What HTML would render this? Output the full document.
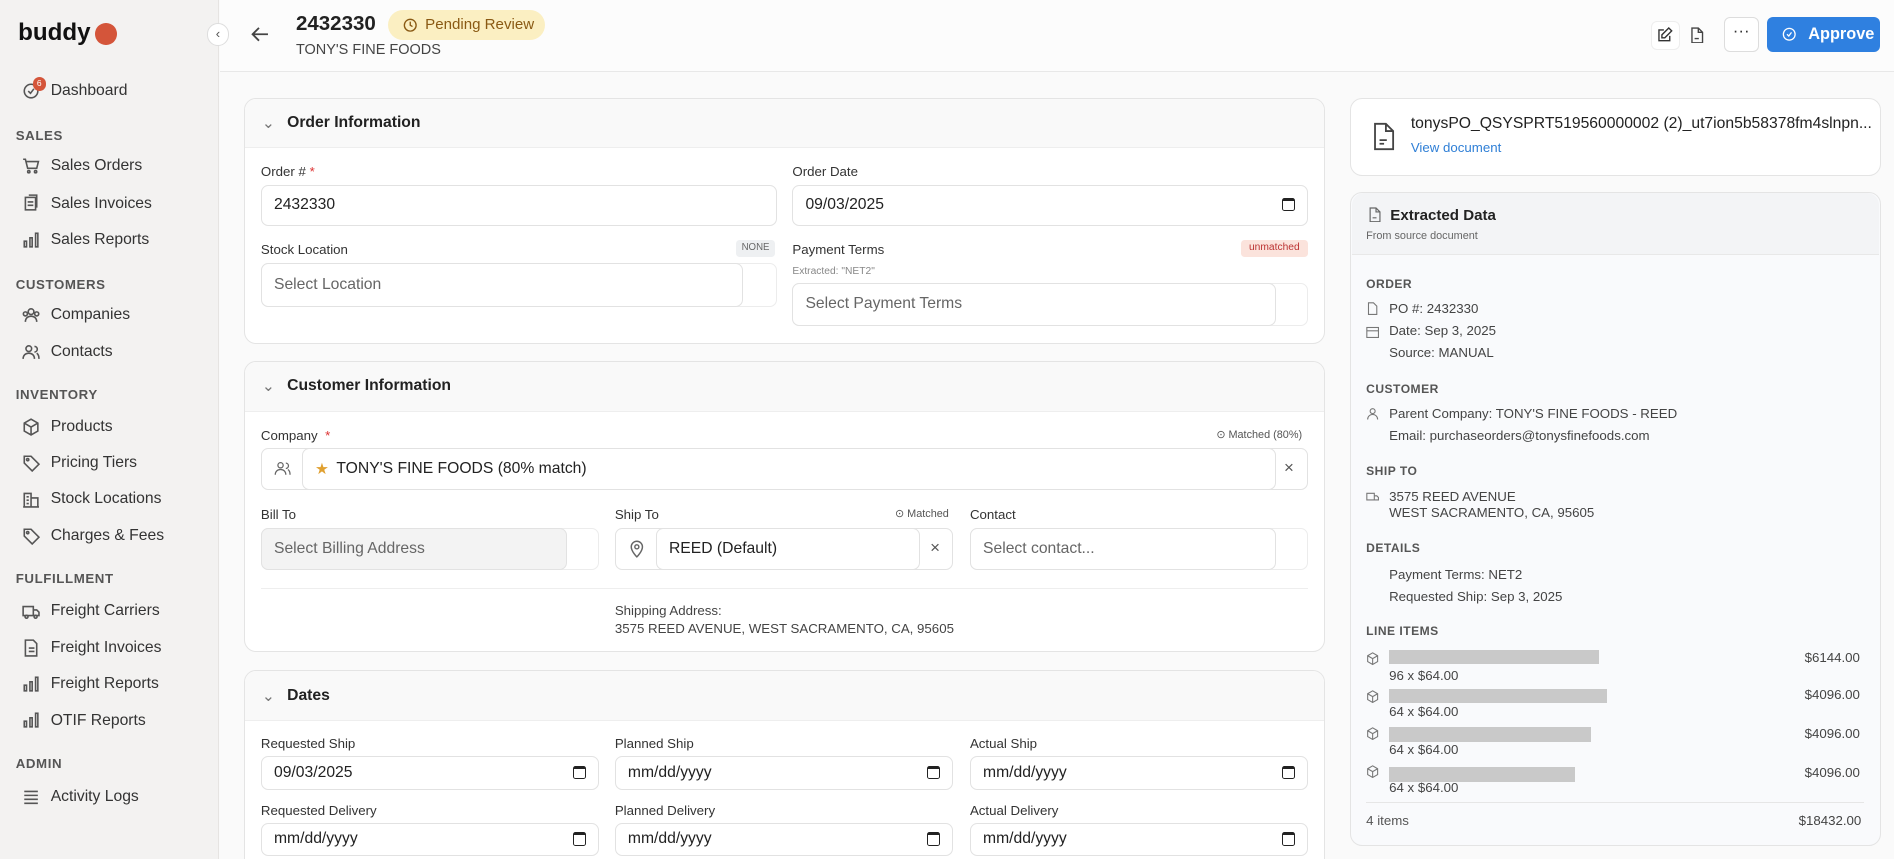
<!DOCTYPE html><html><head><meta charset="utf-8"><style>
*{box-sizing:border-box;margin:0;padding:0}
html,body{width:1894px;height:859px;overflow:hidden;background:#fafafa}
#r{zoom:1.20791;width:1568px;height:711px;position:relative;font-family:"Liberation Sans",sans-serif;color:#222;font-size:12px;overflow:hidden}
.a{position:absolute}
.side{left:0;top:0;width:181px;height:711px;background:#f3f2f1;border-right:1px solid #e6e4e2}
.nav{left:18px;font-size:13px;color:#333;display:flex;align-items:center;gap:9px}
.nav svg{width:15px;height:15px;stroke:#555;fill:none;stroke-width:1.4}
.sec{left:13px;font-size:11px;font-weight:bold;color:#555;letter-spacing:.5px}
.card{background:#fff;border:1px solid #e4e4e4;border-radius:10px;overflow:hidden}
.ch{height:41px;background:#f9f9f9;border-bottom:1px solid #eee;display:flex;align-items:center;padding-left:14px;font-weight:bold;font-size:13px;gap:10px}
.lb{font-size:11px;color:#333}
.in{border:1px solid #e2e2e2;border-radius:6px;background:#fff;font-size:13px;color:#222;display:flex;align-items:center;padding-left:10px}
.ph{color:#666}
.cal{position:absolute;right:10px;top:50%;margin-top:-6px;width:11px;height:11px;border:1.5px solid #222;border-radius:2px;border-top-width:3px}
.rs{font-size:10px;color:#555;font-weight:bold;letter-spacing:.4px}
.rt{font-size:11px;color:#444}
.ri{width:11px;height:11px;stroke:#777;fill:none;stroke-width:1.3}
.blur{background:#c9c9c9;height:12px}
</style></head><body><div id="r">
<div class="a side"></div>
<div class="a" style="left:15px;top:16px;font-size:20px;font-weight:bold;color:#111">buddy</div>
<div class="a" style="left:79px;top:19px;width:18px;height:18px;border-radius:50%;background:#d4553a"></div>

<div class="a nav" style="top:68px"><svg viewBox="0 0 16 16"><circle cx="8" cy="8" r="6"/><path d="M5.5 8l2 2 3-4"/></svg><span style="margin-left:0">Dashboard</span></div>
<div class="a" style="left:27px;top:64px;width:11px;height:11px;border-radius:50%;background:#d4553a;color:#fff;font-size:7px;text-align:center;line-height:11px">6</div>
<div class="a sec" style="top:106px">SALES</div>
<div class="a nav" style="top:130px"><svg viewBox="0 0 16 16"><path d="M1 2h2l2 8h8l1.5-6H4"/><circle cx="6" cy="13" r="1"/><circle cx="12" cy="13" r="1"/></svg>Sales Orders</div>
<div class="a nav" style="top:161px"><svg viewBox="0 0 16 16"><rect x="3" y="3" width="9" height="11"/><path d="M6 1h7v11M5 7h5M5 10h5"/></svg>Sales Invoices</div>
<div class="a nav" style="top:191px"><svg viewBox="0 0 16 16"><rect x="2" y="9" width="2" height="5"/><rect x="7" y="6" width="2" height="8"/><rect x="12" y="2" width="2" height="12"/></svg>Sales Reports</div>
<div class="a sec" style="top:229px">CUSTOMERS</div>
<div class="a nav" style="top:253px"><svg viewBox="0 0 16 16"><circle cx="8" cy="5" r="2.5"/><circle cx="3" cy="7" r="1.8"/><circle cx="13" cy="7" r="1.8"/><path d="M3 14c0-3 2-5 5-5s5 2 5 5"/></svg>Companies</div>
<div class="a nav" style="top:284px"><svg viewBox="0 0 16 16"><circle cx="6" cy="5" r="2.5"/><path d="M1 14c0-3 2-5 5-5s5 2 5 5M11 3a2.5 2.5 0 010 5M13 9c1.5 1 2 3 2 5"/></svg>Contacts</div>
<div class="a sec" style="top:320px">INVENTORY</div>
<div class="a nav" style="top:346px"><svg viewBox="0 0 16 16"><path d="M8 1l6 3.5v7L8 15l-6-3.5v-7zM2 4.5L8 8l6-3.5M8 8v7"/></svg>Products</div>
<div class="a nav" style="top:376px"><svg viewBox="0 0 16 16"><path d="M2 2h6l7 7-6 6-7-7z"/><circle cx="5" cy="5" r="1"/></svg>Pricing Tiers</div>
<div class="a nav" style="top:406px"><svg viewBox="0 0 16 16"><path d="M2 15V3h6v12M8 7h6v8M1 15h14M4 6h2M4 9h2M4 12h2"/></svg>Stock Locations</div>
<div class="a nav" style="top:436px"><svg viewBox="0 0 16 16"><path d="M2 2h6l7 7-6 6-7-7z"/><circle cx="5" cy="5" r="1"/></svg>Charges &amp; Fees</div>
<div class="a sec" style="top:473px">FULFILLMENT</div>
<div class="a nav" style="top:498px"><svg viewBox="0 0 16 16"><path d="M1 4h9v8H1zM10 7h3l2 2v3h-5"/><circle cx="4" cy="13" r="1.3"/><circle cx="12" cy="13" r="1.3"/></svg>Freight Carriers</div>
<div class="a nav" style="top:529px"><svg viewBox="0 0 16 16"><path d="M3 1h7l3 3v11H3zM6 8h5M6 11h5"/></svg>Freight Invoices</div>
<div class="a nav" style="top:559px"><svg viewBox="0 0 16 16"><rect x="2" y="9" width="2" height="5"/><rect x="7" y="6" width="2" height="8"/><rect x="12" y="2" width="2" height="12"/></svg>Freight Reports</div>
<div class="a nav" style="top:589px"><svg viewBox="0 0 16 16"><rect x="2" y="9" width="2" height="5"/><rect x="7" y="6" width="2" height="8"/><rect x="12" y="2" width="2" height="12"/></svg>OTIF Reports</div>
<div class="a sec" style="top:626px">ADMIN</div>
<div class="a nav" style="top:652px"><svg viewBox="0 0 16 16"><path d="M2 3h12M2 6.5h12M2 10h12M2 13.5h12"/></svg>Activity Logs</div>

<!-- header -->
<div class="a" style="left:182px;top:0;width:1386px;height:60px;background:#fcfcfc;border-bottom:1px solid #e8e8e8"></div>
<div class="a" style="left:171px;top:19px;width:19px;height:19px;border-radius:50%;background:#fff;border:1px solid #ddd;font-size:11px;color:#555;text-align:center;line-height:16px;z-index:5">‹</div>
<svg class="a" style="left:207px;top:20px" width="17" height="17" viewBox="0 0 16 16" fill="none" stroke="#444" stroke-width="1.4"><path d="M14 8H2M7 3L2 8l5 5"/></svg>
<div class="a" style="left:245px;top:10px;font-size:17px;font-weight:bold;color:#222">2432330</div>
<div class="a" style="left:321px;top:8px;width:130px;height:25px;border-radius:13px;background:#fbefc2;color:#8a5a14;font-size:12.5px;display:flex;align-items:center;padding-left:13px;gap:6px"><svg width="12" height="12" viewBox="0 0 16 16" fill="none" stroke="#8a5a14" stroke-width="1.5"><circle cx="8" cy="8" r="6.5"/><path d="M8 4v4l2.5 1.5"/></svg>Pending Review</div>
<div class="a" style="left:245px;top:35px;font-size:12px;color:#444">TONY'S FINE FOODS</div>
<div class="a" style="left:1367px;top:17px;width:24px;height:24px;border:1px solid #eee;border-radius:5px;background:#fff"></div>
<svg class="a" style="left:1372px;top:22px" width="13" height="13" viewBox="0 0 16 16" fill="none" stroke="#333" stroke-width="1.4"><path d="M7 3H2v11h11V9M12 1l3 3-7 7H5V8z"/></svg>
<svg class="a" style="left:1399px;top:22px" width="12" height="14" viewBox="0 0 12 16" fill="none" stroke="#444" stroke-width="1.3"><path d="M1 1h6l4 4v10H1zM7 1v4h4M3.5 11h4"/></svg>
<div class="a" style="left:1427px;top:14px;width:29px;height:29px;border:1px solid #ddd;border-radius:5px;background:#fff;text-align:center;font-size:14px;line-height:22px;color:#333">···</div>
<div class="a" style="left:1463px;top:14px;width:93px;height:29px;border-radius:5px;background:#2f80e0;color:#fff;font-size:13.5px;font-weight:bold;display:flex;align-items:center;padding-left:12px;gap:10px"><svg width="12" height="12" viewBox="0 0 16 16" fill="none" stroke="#fff" stroke-width="1.4"><circle cx="8" cy="8" r="6.5"/><path d="M5.5 8l2 2 3-4"/></svg>Approve</div>

<!-- card 1 -->
<div class="a card" style="left:202px;top:81px;width:895px;height:204px"><div class="ch"><span style="color:#777;font-weight:normal">⌄</span>Order Information</div></div>
<div class="a lb" style="left:216px;top:136px">Order # <span style="color:#d33">*</span></div>
<div class="a in" style="left:216px;top:153px;width:427px;height:34px">2432330</div>
<div class="a lb" style="left:656px;top:136px">Order Date</div>
<div class="a in" style="left:656px;top:153px;width:427px;height:34px">09/03/2025<span class="cal"></span></div>
<div class="a lb" style="left:216px;top:200px">Stock Location</div>
<div class="a" style="left:609px;top:199px;width:33px;height:14px;background:#eef0f2;border-radius:3px;font-size:8px;color:#666;text-align:center;line-height:14px">NONE</div>
<div class="a in" style="left:216px;top:218px;width:427px;height:36px;border-color:#ececec"></div>
<div class="a in ph" style="left:216px;top:218px;width:399px;height:36px">Select Location</div>
<div class="a lb" style="left:656px;top:200px">Payment Terms</div>
<div class="a" style="left:1027px;top:199px;width:56px;height:14px;background:#fbe3dc;border-radius:3px;font-size:8.5px;color:#b33;text-align:center;line-height:14px">unmatched</div>
<div class="a" style="left:656px;top:220px;font-size:8.5px;color:#888">Extracted: "NET2"</div>
<div class="a in" style="left:656px;top:234px;width:427px;height:36px;border-color:#ececec"></div>
<div class="a in ph" style="left:656px;top:234px;width:400px;height:36px">Select Payment Terms</div>

<!-- card 2 -->
<div class="a card" style="left:202px;top:299px;width:895px;height:241px"><div class="ch"><span style="color:#777;font-weight:normal">⌄</span>Customer Information</div></div>
<div class="a lb" style="left:216px;top:354px">Company &nbsp;<span style="color:#d33">*</span></div>
<div class="a" style="left:1007px;top:354px;font-size:9px;color:#555">⊙ Matched (80%)</div>
<div class="a in" style="left:216px;top:371px;width:867px;height:35px"></div>
<svg class="a" style="left:226px;top:381px" width="16" height="14" viewBox="0 0 16 16" fill="none" stroke="#666" stroke-width="1.2"><circle cx="6" cy="5" r="2.5"/><path d="M1 14c0-3 2-5 5-5s5 2 5 5M11 3a2.5 2.5 0 010 5M13 9c1.5 1 2 3 2 5"/></svg>
<div class="a in" style="left:250px;top:371px;width:806px;height:35px;gap:6px"><span style="color:#e0a030">★</span>TONY'S FINE FOODS (80% match)</div>
<div class="a" style="left:1063px;top:379px;font-size:14px;color:#555">×</div>
<div class="a lb" style="left:216px;top:420px">Bill To</div>
<div class="a in" style="left:216px;top:437px;width:280px;height:35px;border-color:#ececec"></div>
<div class="a in ph" style="left:216px;top:437px;width:253px;height:35px;background:#f3f3f3">Select Billing Address</div>
<div class="a lb" style="left:509px;top:420px">Ship To</div>
<div class="a" style="left:741px;top:420px;font-size:9px;color:#555">⊙ Matched</div>
<div class="a in" style="left:509px;top:437px;width:280px;height:35px"></div>
<svg class="a" style="left:521px;top:447px" width="13" height="15" viewBox="0 0 14 16" fill="none" stroke="#666" stroke-width="1.3"><path d="M7 15s5-5 5-9A5 5 0 002 6c0 4 5 9 5 9z"/><circle cx="7" cy="6" r="1.8"/></svg>
<div class="a in" style="left:543px;top:437px;width:219px;height:35px">REED (Default)</div>
<div class="a" style="left:770px;top:445px;font-size:14px;color:#555">×</div>
<div class="a lb" style="left:803px;top:420px">Contact</div>
<div class="a in" style="left:803px;top:437px;width:280px;height:35px;border-color:#ececec"></div>
<div class="a in ph" style="left:803px;top:437px;width:253px;height:35px">Select contact...</div>
<div class="a" style="left:216px;top:487px;width:867px;height:1px;background:#eee"></div>
<div class="a" style="left:509px;top:498px;font-size:11px;color:#444;line-height:15px">Shipping Address:<br>3575 REED AVENUE, WEST SACRAMENTO, CA, 95605</div>

<!-- card 3 -->
<div class="a card" style="left:202px;top:555px;width:895px;height:170px"><div class="ch"><span style="color:#777;font-weight:normal">⌄</span>Dates</div></div>
<div class="a lb" style="left:216px;top:609px">Requested Ship</div>
<div class="a lb" style="left:509px;top:609px">Planned Ship</div>
<div class="a lb" style="left:803px;top:609px">Actual Ship</div>
<div class="a in" style="left:216px;top:626px;width:280px;height:28px">09/03/2025<span class="cal"></span></div>
<div class="a in" style="left:509px;top:626px;width:280px;height:28px">mm/dd/yyyy<span class="cal"></span></div>
<div class="a in" style="left:803px;top:626px;width:280px;height:28px">mm/dd/yyyy<span class="cal"></span></div>
<div class="a lb" style="left:216px;top:665px">Requested Delivery</div>
<div class="a lb" style="left:509px;top:665px">Planned Delivery</div>
<div class="a lb" style="left:803px;top:665px">Actual Delivery</div>
<div class="a in" style="left:216px;top:681px;width:280px;height:28px">mm/dd/yyyy<span class="cal"></span></div>
<div class="a in" style="left:509px;top:681px;width:280px;height:28px">mm/dd/yyyy<span class="cal"></span></div>
<div class="a in" style="left:803px;top:681px;width:280px;height:28px">mm/dd/yyyy<span class="cal"></span></div>

<!-- right -->
<div class="a card" style="left:1118px;top:81px;width:439px;height:65px"></div>
<svg class="a" style="left:1136px;top:101px" width="20" height="24" viewBox="0 0 12 16" fill="none" stroke="#444" stroke-width="1"><path d="M1 1h6l4 4v10H1zM7 1v4h4M3.5 10h4M3.5 12h2.5"/></svg>
<div class="a" style="left:1168px;top:95px;font-size:13px;color:#222">tonysPO_QSYSPRT519560000002 (2)_ut7ion5b58378fm4slnpn...</div>
<div class="a" style="left:1168px;top:116px;font-size:11px;color:#2f7fd6">View document</div>

<div class="a card" style="left:1118px;top:159px;width:439px;height:541px;background:#f9fafc"></div>
<div class="a" style="left:1119px;top:160px;width:437px;height:51px;background:#f3f4f6;border-bottom:1px solid #e8e8e8;border-radius:10px 10px 0 0"></div>
<svg class="a" style="left:1133px;top:171px" width="10" height="13" viewBox="0 0 12 16" fill="none" stroke="#666" stroke-width="1.2"><path d="M1 1h6l4 4v10H1zM7 1v4h4M3.5 11h4"/></svg>
<div class="a" style="left:1151px;top:171px;font-size:12.5px;font-weight:bold">Extracted Data</div>
<div class="a" style="left:1131px;top:190px;font-size:9px;color:#666">From source document</div>
<div class="a rs" style="left:1131px;top:229px">ORDER</div>
<svg class="a ri" style="left:1131px;top:250px" viewBox="0 0 12 16"><path d="M1 1h6l4 4v10H1z"/></svg><div class="a rt" style="left:1150px;top:249px">PO #: 2432330</div>
<svg class="a ri" style="left:1131px;top:269px" viewBox="0 0 16 16"><rect x="1" y="3" width="14" height="12"/><path d="M1 7h14"/></svg><div class="a rt" style="left:1150px;top:267px">Date: Sep 3, 2025</div>
<div class="a rt" style="left:1150px;top:286px">Source: MANUAL</div>
<div class="a rs" style="left:1131px;top:316px">CUSTOMER</div>
<svg class="a ri" style="left:1131px;top:337px" viewBox="0 0 16 16"><circle cx="8" cy="5" r="3"/><path d="M2 15c0-4 3-6 6-6s6 2 6 6"/></svg><div class="a rt" style="left:1150px;top:336px">Parent Company: TONY'S FINE FOODS - REED</div>
<div class="a rt" style="left:1150px;top:354px">Email: purchaseorders@tonysfinefoods.com</div>
<div class="a rs" style="left:1131px;top:384px">SHIP TO</div>
<svg class="a ri" style="left:1131px;top:406px" viewBox="0 0 16 16"><path d="M1 4h9v8H1zM10 7h3l2 2v3h-5"/></svg><div class="a rt" style="left:1150px;top:405px;line-height:13px">3575 REED AVENUE<br>WEST SACRAMENTO, CA, 95605</div>
<div class="a rs" style="left:1131px;top:448px">DETAILS</div>
<div class="a rt" style="left:1150px;top:469px">Payment Terms: NET2</div>
<div class="a rt" style="left:1150px;top:488px">Requested Ship: Sep 3, 2025</div>
<div class="a rs" style="left:1131px;top:517px">LINE ITEMS</div>
<svg class="a ri" style="left:1131px;top:540px" viewBox="0 0 16 16"><path d="M8 1l6 3.5v7L8 15l-6-3.5v-7zM2 4.5L8 8l6-3.5M8 8v7"/></svg>
<div class="a blur" style="left:1150px;top:538px;width:174px"></div><div class="a rt" style="left:1150px;top:553px">96 x $64.00</div><div class="a rt" style="left:1494px;top:538px">$6144.00</div>
<svg class="a ri" style="left:1131px;top:571px" viewBox="0 0 16 16"><path d="M8 1l6 3.5v7L8 15l-6-3.5v-7zM2 4.5L8 8l6-3.5M8 8v7"/></svg>
<div class="a blur" style="left:1150px;top:570px;width:180px"></div><div class="a rt" style="left:1150px;top:583px">64 x $64.00</div><div class="a rt" style="left:1494px;top:569px">$4096.00</div>
<svg class="a ri" style="left:1131px;top:602px" viewBox="0 0 16 16"><path d="M8 1l6 3.5v7L8 15l-6-3.5v-7zM2 4.5L8 8l6-3.5M8 8v7"/></svg>
<div class="a blur" style="left:1150px;top:602px;width:167px"></div><div class="a rt" style="left:1150px;top:614px">64 x $64.00</div><div class="a rt" style="left:1494px;top:601px">$4096.00</div>
<svg class="a ri" style="left:1131px;top:633px" viewBox="0 0 16 16"><path d="M8 1l6 3.5v7L8 15l-6-3.5v-7zM2 4.5L8 8l6-3.5M8 8v7"/></svg>
<div class="a blur" style="left:1150px;top:635px;width:154px"></div><div class="a rt" style="left:1150px;top:646px">64 x $64.00</div><div class="a rt" style="left:1494px;top:633px">$4096.00</div>
<div class="a" style="left:1131px;top:664px;width:412px;height:1px;background:#e6e6e6"></div>
<div class="a rt" style="left:1131px;top:673px;color:#555">4 items</div>
<div class="a rt" style="left:1489px;top:673px">$18432.00</div>
</div></body></html>
